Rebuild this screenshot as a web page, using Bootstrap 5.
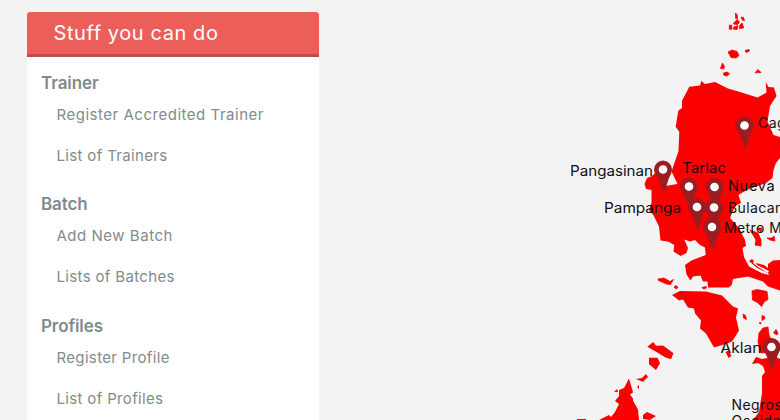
<!DOCTYPE html>
<html lang="en">
<head>
<meta charset="utf-8">
<meta name="viewport" content="width=device-width, initial-scale=1">
<title>Trainer Registry</title>
<link href="https://cdn.jsdelivr.net/npm/bootstrap@5.3.0/dist/css/bootstrap.min.css" rel="stylesheet">
<style>
body{background:#f3f3f3;font-family:Inter,"Open Sans",sans-serif;color:#7f8c8d}
.page{height:420px;padding-left:27px}
.side-panel{width:292px;margin-top:12px;border-radius:3px 3px 0 0}
.side-title{height:45px;background:#ec5e5a;border-bottom:3px solid #bb4e4f;border-radius:3px 3px 0 0;padding-left:26.5px;font-size:20px;letter-spacing:.58px;line-height:42px}
.side-body{padding:12.6px 14px}
.group-name{font-size:17px;line-height:26px;font-weight:600;letter-spacing:-.1px;margin:0}
.side-nav{margin-top:-2px;margin-bottom:15.5px}
.side-link{font-size:15px;line-height:41px;letter-spacing:.34px;padding:0 0 0 15.5px;color:#7f8c8d;font-weight:400}
.side-link.airy{letter-spacing:.52px}
.map{width:461px;height:420px}
.map text{font-family:Inter,"Open Sans",sans-serif;font-size:14px;fill:#111}
.map .spaced{letter-spacing:.4px}
.map .spaced-wide{font-size:14.5px;letter-spacing:.7px}
</style>
</head>
<body class="overflow-hidden">
<div class="page d-flex overflow-hidden">
  <aside class="side-panel bg-white flex-shrink-0">
    <div class="side-title text-white">Stuff you can do</div>
    <div class="side-body">
      <div><h2 class="group-name">Trainer</h2>
        <nav class="nav flex-column side-nav"><a class="nav-link side-link airy" href="#">Register Accredited Trainer</a><a class="nav-link side-link" href="#">List of Trainers</a></nav></div>
      <div><h2 class="group-name">Batch</h2>
        <nav class="nav flex-column side-nav"><a class="nav-link side-link airy" href="#">Add New Batch</a><a class="nav-link side-link" href="#">Lists of Batches</a></nav></div>
      <div><h2 class="group-name">Profiles</h2>
        <nav class="nav flex-column side-nav"><a class="nav-link side-link" href="#">Register Profile</a><a class="nav-link side-link" href="#">List of Profiles</a></nav></div>
    </div>
  </aside>
  <svg class="map flex-shrink-0" viewBox="319 0 461 420" role="img" aria-label="Map of provinces">
    <defs>
      <g id="pin"><path d="M-9 0A9 9 0 1 1 9 0C9 3.5 7 6 5.800 9L1 24 -4.800 9C-6 6-9 3.500-9 0Z" fill="#9b1c21"/><circle r="4.300" fill="#fff"/></g>
    </defs>
    <g fill="#fa0000">
      <!-- Luzon -->
      <path d="M689.3 86.7L700 85.5 701.3 81 705 84 715 82 728 88.5 740 92 757.5 97.5 766.5 92.5 765.7 82 768.5 87 774 87.5 776.5 96 770 106 767.5 121.5 773.5 135 780 137V158L776 163 773.5 170 772.5 178 766 183 746.5 190 738.5 195 741 203 735 206 730 218 739 228 745 240 746 246 742.5 248 744 257 749 266.5 761.5 273 769 275 768 273 757 268 749 261 752 259 754 261 753 263 758 267 768 273 769 271 757 265 756 263 764 265 768 268 768 264 773 260.5 780 260V290.5L768 286.5 763 281.5 748 276.5 733 279 731.7 285 729 287.5H708L707.5 281.5 703 281.5 700.5 275.5 693 276.5 690.5 280.5 686.5 274.5 685 265 691.5 260.5 705.7 255 705 247.5 700 245 695 240 690 241.5 684.3 239.5 688 248 686.5 253 680.5 256 673.5 251.5 674.3 245 668 241.5 660.5 240.5 659 226.5 653.3 215 649 210 651.5 203 651.5 190 646 189 644.5 184 647 178 652 176 655 173 660 177 665 186 677.5 184 671.5 171.5 678.5 151 679.3 131.7 675.7 126.7 678.3 110.7 682 108V100.7Z"/>
      <!-- Northern islets -->
      <g stroke="#fa0000" stroke-width=".8" stroke-linejoin="round">
      <path d="M735.5 13l1.500 1.500 .7 4-2 .3zM741 17l2.500 .5 1 3-2-.3zM734 22.500l3.500-3 2 3-2 2-4-.5zM729.500 25l2.500.5-.5 4-2.300-.5zM734 27l4-1.500-1 4-4-.5zM740 25l2-2 1.800 5-4.500.5zM728 52l4-2 5 1.500 2 4-3 2.500-5-.5zM745 50.500l4-1 .5 1.500-3.500 1.500zM722.500 63l2 3.500-1 2.500-3-.5zM723.500 73l4-1 2 2-2.500 2-3-.5zM758 69.500l3 3-6 .300z"/>
      <!-- Lubang, Marinduque and eastern islands -->
      <path d="M658 279l6-1 6 3.500 3.500-2-3 5-4-.5-8-3.500zM674 287l2-1.500 2 2-2 1.500zM702 287.500l4-1 .5 1.500-3 1zM752 291l5-1.500 10 2 1 8-3.500 2-3 5-4-4-5-2.500zM743 314l2.500 1.500 1 4-3-1.500zM762 315.500l2.500 1 .5 2-3 2zM759 323l2-.5v1.500zM759 333l4-5 5-1 1 8 3 7-3 10-8 1-3-11zM773.500 333l2.500-3.500 2 3.500-1 2zM750 230l8 3 3 7v6l-6-1 1-5zM767 238l5 0 2-2 1 5-5-1zM757 228h5l-1 4z"/>
      </g>
      <!-- Mindoro -->
      <path d="M672 295l8-4 24 .5 2 0 16 4 5 5 6 6 5 2-2 9 3 13-7 11-5 2-13 4-8-14-6-5 1-8-6-7-1-5-6-1-5-8-4 1-5-4z"/>
      <path d="M725.500 352l3-1.500 3 5.500-3 2z"/>
      <!-- Panay and Negros -->
      <path d="M752 364l4-7 6 2 5-1 9-1 4 2v61H753l6-8 3-19v-17l3-4-2-6-5-3z"/>
      <!-- Palawan and Calamian -->
      <path d="M647.300 346.700L653.300 342 656 345.700 663 345.500 673.500 353.300 671 359.300 665 357.300 656.500 352ZM649 357.700L657.500 357.700 660 363.300 656 370 649 364.300ZM636 379l6-1 4-4 2 3-4 3.500 1 1-3 0zM637 387l2-2v4zM629 378.500l3 10 1 4-3 2 3 4 0 2 5 9 1 10.500H599l10-5 2 2 4-5 4-8-4-3 4-5 0-6 5-2zM614 392l3-3 1 3zM643 415l4-3 9 4-6 4-7-1zM577 419h9v1h-9z"/>
    </g>
    <use href="#pin" x="744.500" y="125.500"/><use href="#pin" x="663" y="169.500"/>
    <use href="#pin" x="689" y="186.500"/><use href="#pin" x="714.500" y="187"/>
    <use href="#pin" x="697" y="207"/><use href="#pin" x="714" y="207.500"/>
    <use href="#pin" x="712" y="227"/><use href="#pin" x="771.500" y="347"/>
    <text class="spaced" x="758" y="128.400">Cagayan</text>
    <text x="570" y="175.500" textLength="83" lengthAdjust="spacingAndGlyphs">Pangasinan</text>
    <text x="682" y="173" textLength="44" lengthAdjust="spacingAndGlyphs">Tarlac</text>
    <text class="spaced-wide" x="728" y="190.500">Nueva Ecija</text>
    <text x="604" y="213" textLength="77" lengthAdjust="spacingAndGlyphs">Pampanga</text>
    <text class="spaced" x="728" y="213">Bulacan</text>
    <text class="spaced" x="724" y="232.500">Metro Manila</text>
    <text x="720.500" y="353" textLength="41" lengthAdjust="spacingAndGlyphs">Aklan</text>
    <text class="spaced" x="731.500" y="409.500">Negros</text>
    <text class="spaced" x="731.500" y="426">Occidental</text>
  </svg>
</div>
<script src="https://cdn.jsdelivr.net/npm/bootstrap@5.3.0/dist/js/bootstrap.bundle.min.js"></script>
</body>
</html>
